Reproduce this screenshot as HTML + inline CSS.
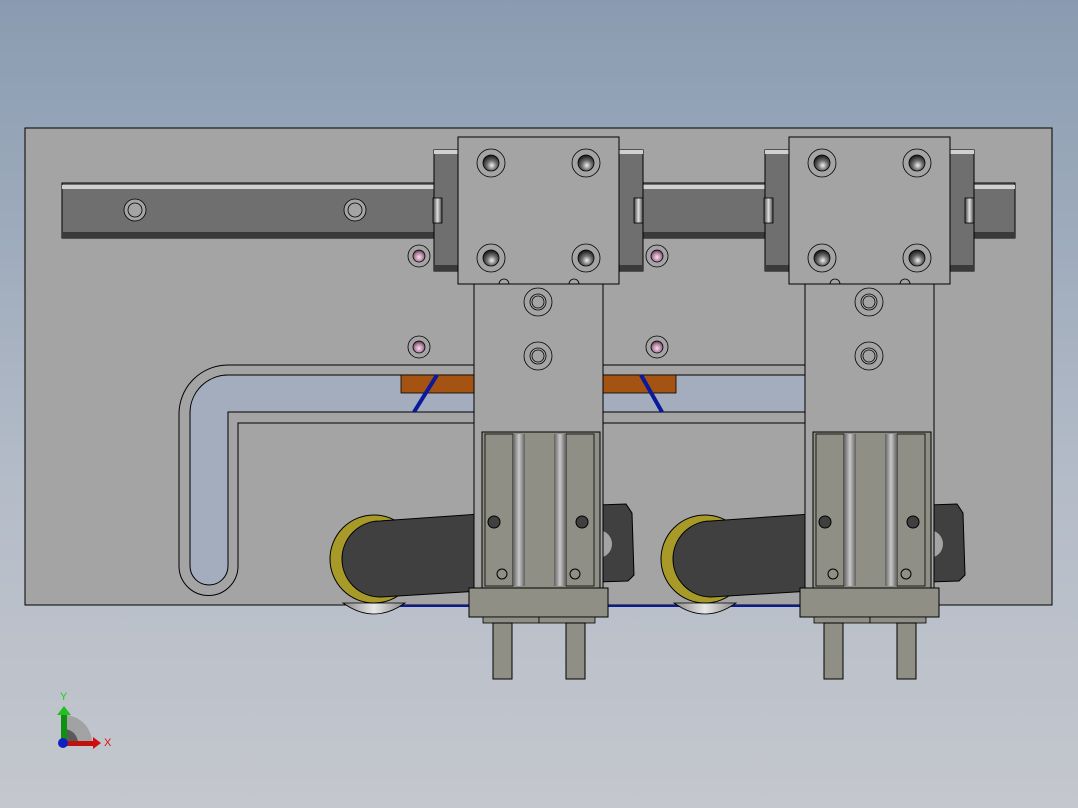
<!DOCTYPE html>
<html><head><style>
html,body{margin:0;padding:0;width:1078px;height:808px;overflow:hidden}
body{background:linear-gradient(#8a9bb1,#b4bcc8 60%,#c4c7cd);font-family:"Liberation Sans",sans-serif}
svg{display:block}
</style></head><body>
<svg width="1078" height="808" viewBox="0 0 1078 808" xmlns="http://www.w3.org/2000/svg">
<defs>
<radialGradient id="bolt" cx="0.55" cy="0.65" r="0.6">
<stop offset="0" stop-color="#f0f0f0"/><stop offset="0.5" stop-color="#707070"/><stop offset="1" stop-color="#202020"/>
</radialGradient>
<radialGradient id="pink" cx="0.5" cy="0.6" r="0.6">
<stop offset="0" stop-color="#f8e0f0"/><stop offset="0.6" stop-color="#b080a0"/><stop offset="1" stop-color="#503040"/>
</radialGradient>
<linearGradient id="slot" x1="0" x2="1">
<stop offset="0" stop-color="#404040"/><stop offset="0.5" stop-color="#e0e0e0"/><stop offset="1" stop-color="#404040"/>
</linearGradient>
<linearGradient id="rod" x1="0" x2="1">
<stop offset="0" stop-color="#606060"/><stop offset="0.5" stop-color="#c8c8c8"/><stop offset="1" stop-color="#606060"/>
</linearGradient>
<linearGradient id="wheel" x1="0" x2="1">
<stop offset="0" stop-color="#888"/><stop offset="0.5" stop-color="#e8e8e8"/><stop offset="1" stop-color="#888"/>
</linearGradient>
<g id="carr">
<path d="M343 603 Q374 625 405 603 Z" fill="url(#wheel)" stroke="#000" stroke-width="0.8"/>
<circle cx="374" cy="559" r="44" fill="#a89a28" stroke="#000"/>
<path d="M380 521 L480 514 L480 591 L380 597 A38 38 0 0 1 380 521 Z" fill="#404040" stroke="#000"/>
<path d="M598 505 L626 504 L632 513 L634 575 L628 581 L598 582 Z" fill="#404040" stroke="#000"/>
<path d="M598 530 A14 14 0 0 1 598 558 Z" fill="#a4a4a4"/>
<rect x="434" y="150" width="209" height="121" fill="#6f6f6f" stroke="#000"/>
<rect x="434" y="150" width="209" height="4" fill="#d0d0d0"/>
<rect x="434" y="265" width="209" height="6" fill="#3a3a3a"/>
<rect x="433" y="198" width="9" height="25" fill="url(#slot)" stroke="#000" stroke-width="0.8"/>
<rect x="634" y="198" width="9" height="25" fill="url(#slot)" stroke="#000" stroke-width="0.8"/>
<rect x="474" y="284" width="129" height="310" fill="#a4a4a4" stroke="#000"/>
<g fill="none" stroke="#000" stroke-width="0.8">
<circle cx="538" cy="302" r="14"/><circle cx="538" cy="302" r="8"/><circle cx="538" cy="302" r="6"/>
<circle cx="538" cy="356" r="14"/><circle cx="538" cy="356" r="8"/><circle cx="538" cy="356" r="6"/>
</g>
<rect x="458" y="137" width="161" height="147" fill="#a4a4a4" stroke="#000"/>
<g stroke="#000" stroke-width="0.8">
<circle cx="491" cy="163" r="14" fill="none"/><circle cx="491" cy="163" r="8" fill="url(#bolt)"/>
<circle cx="586" cy="163" r="14" fill="none"/><circle cx="586" cy="163" r="8" fill="url(#bolt)"/>
<circle cx="491" cy="258" r="14" fill="none"/><circle cx="491" cy="258" r="8" fill="url(#bolt)"/>
<circle cx="586" cy="258" r="14" fill="none"/><circle cx="586" cy="258" r="8" fill="url(#bolt)"/>
<path d="M499 284 A5 5 0 0 1 509 284" fill="none"/><path d="M569 284 A5 5 0 0 1 579 284" fill="none"/>
</g>
<rect x="482" y="432" width="118" height="156" fill="#8f8f86" stroke="#000"/>
<rect x="485" y="434" width="28" height="152" fill="#8f8f86" stroke="#000" stroke-width="0.8"/>
<rect x="566" y="434" width="28" height="152" fill="#8f8f86" stroke="#000" stroke-width="0.8"/>
<rect x="513" y="434" width="12" height="152" fill="url(#rod)"/>
<rect x="554" y="434" width="12" height="152" fill="url(#rod)"/>
<circle cx="494" cy="522" r="6" fill="#404040" stroke="#000"/>
<circle cx="582" cy="522" r="6" fill="#404040" stroke="#000"/>
<circle cx="502" cy="574" r="5" fill="none" stroke="#000"/>
<circle cx="575" cy="574" r="5" fill="none" stroke="#000"/>
<rect x="469" y="588" width="139" height="29" fill="#8f8f86" stroke="#000"/>
<rect x="483" y="617" width="56" height="6" fill="#8f8f86" stroke="#000" stroke-width="0.8"/>
<rect x="539" y="617" width="56" height="6" fill="#8f8f86" stroke="#000" stroke-width="0.8"/>
<rect x="493" y="623" width="19" height="56" fill="#8f8f86" stroke="#000"/>
<rect x="566" y="623" width="19" height="56" fill="#8f8f86" stroke="#000"/>
</g>
</defs>
<rect x="25" y="128" width="1027" height="477" fill="#a4a4a4" stroke="#000"/>
<line x1="380" y1="606" x2="830" y2="606" stroke="#0a1a9a" stroke-width="2"/>
<rect x="62" y="183" width="953" height="55" fill="#6f6f6f" stroke="#000"/>
<rect x="62" y="185" width="953" height="4" fill="#d0d0d0"/>
<rect x="62" y="232" width="953" height="6" fill="#3a3a3a"/>
<g fill="#a4a4a4" stroke="#000" stroke-width="0.8">
<circle cx="135" cy="210" r="11"/><circle cx="135" cy="210" r="7"/>
<circle cx="355" cy="210" r="11"/><circle cx="355" cy="210" r="7"/>
</g>
<path d="M933 365 L228 365 A49 49 0 0 0 179 414 L179 566 A29 29 0 0 0 238 566 L238 423 L933 423" fill="#a4a4a4" stroke="#000"/>
<path d="M933 375 L228 375 A38 38 0 0 0 190 413 L190 566 A19 19 0 0 0 228 566 L228 412 L933 412 Z" fill="#a3adbd" stroke="#000"/>
<rect x="401" y="375" width="74" height="18" fill="#a55313" stroke="#000" stroke-width="0.8"/>
<rect x="603" y="375" width="73" height="18" fill="#a55313" stroke="#000" stroke-width="0.8"/>
<line x1="437" y1="375" x2="414" y2="412" stroke="#0a1a9a" stroke-width="4"/>
<line x1="641" y1="375" x2="662" y2="412" stroke="#0a1a9a" stroke-width="4"/>
<g stroke="#000" stroke-width="0.8">
<circle cx="419" cy="256" r="11" fill="none"/><circle cx="419" cy="256" r="6" fill="url(#pink)"/>
<circle cx="657" cy="256" r="11" fill="none"/><circle cx="657" cy="256" r="6" fill="url(#pink)"/>
<circle cx="419" cy="347" r="11" fill="none"/><circle cx="419" cy="347" r="6" fill="url(#pink)"/>
<circle cx="657" cy="347" r="11" fill="none"/><circle cx="657" cy="347" r="6" fill="url(#pink)"/>
</g>
<use href="#carr"/>
<use href="#carr" transform="translate(331,0)"/>
<path d="M64 715 A28 28 0 0 1 92 743 L64 743 Z" fill="#9a9a9a" opacity="0.8"/>
<path d="M64 729 A14 14 0 0 1 78 743 L64 743 Z" fill="#5a5a5a"/>
<rect x="61" y="713" width="6" height="30" fill="#109010"/>
<path d="M57 715 L64 706 L71 715 Z" fill="#20c020"/>
<rect x="64" y="741" width="30" height="5" fill="#c01010"/>
<path d="M93 737 L101 743 L93 749 Z" fill="#d01010"/>
<circle cx="63" cy="743" r="5" fill="#1020c0"/>
<text x="60" y="700" font-size="11" fill="#20d020">Y</text>
<text x="104" y="746" font-size="11" fill="#e01010">X</text>
</svg>
</body></html>
